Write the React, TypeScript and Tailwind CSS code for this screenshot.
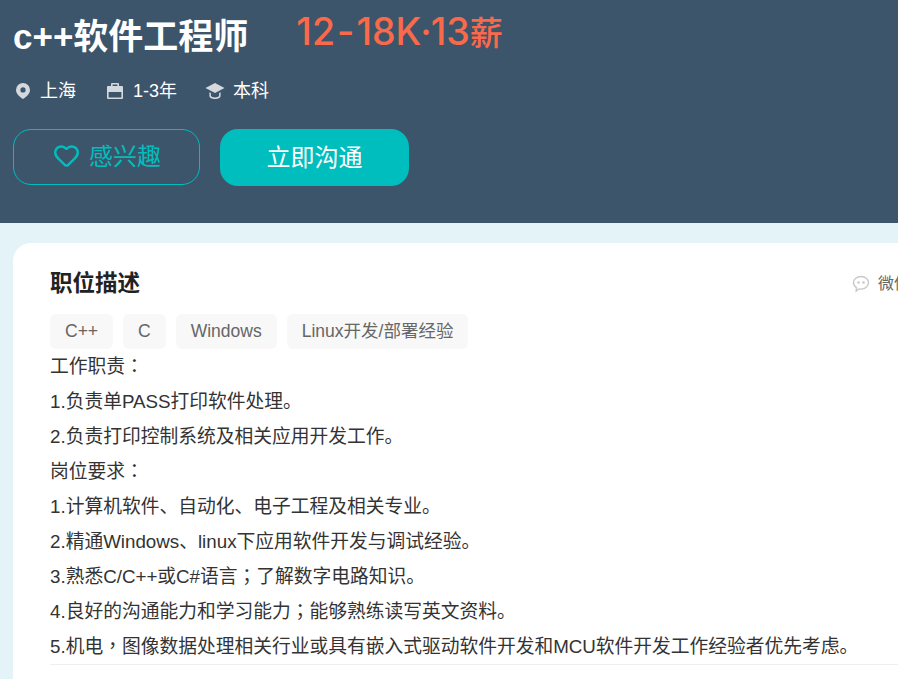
import { Heart } from "lucide-react";

const fontStack = "font-['Liberation_Sans','Noto_Sans_CJK_SC',sans-serif]";

const tags = ["C++", "C", "Windows", "Linux开发/部署经验"];

const descLines = [
  "工作职责：",
  "1.负责单PASS打印软件处理。",
  "2.负责打印控制系统及相关应用开发工作。",
  "岗位要求：",
  "1.计算机软件、自动化、电子工程及相关专业。",
  "2.精通Windows、linux下应用软件开发与调试经验。",
  "3.熟悉C/C++或C#语言；了解数字电路知识。",
  "4.良好的沟通能力和学习能力；能够熟练读写英文资料。",
  "5.机电，图像数据处理相关行业或具有嵌入式驱动软件开发和MCU软件开发工作经验者优先考虑。",
];

// the colon, comma and semicolon sit centred in their cell in the reference font
function DescLine({ text }: { text: string }) {
  return (
    <p className="h-[35px] whitespace-nowrap">
      {text.split(/([：，；])/).map((part, index) =>
        index % 2 === 1 ? (
          <span key={index} className="font-['Noto_Sans_CJK_TC',sans-serif] leading-[0]">{part}</span>
        ) : (
          part
        ),
      )}
    </p>
  );
}

function PinIcon() {
  return (
    <svg width="16" height="18" viewBox="0 0 16 18" fill="#d5d9de">
      <path fillRule="evenodd" d="M8 1a7 7 0 0 1 7 7c0 3.500-3.800 7.200-7 9-3.200-1.800-7-5.500-7-9a7 7 0 0 1 7-7Zm0 4.300a2.600 2.600 0 1 0 0 5.200 2.600 2.600 0 0 0 0-5.200Z" />
    </svg>
  );
}

function CaseIcon() {
  return (
    <svg width="18" height="18" viewBox="0 0 18 18" fill="#d5d9de">
      <path fillRule="evenodd" d="M6 1h6a1 1 0 0 1 1 1v2h3a1 1 0 0 1 1 1v11a1 1 0 0 1-1 1H2a1 1 0 0 1-1-1V5a1 1 0 0 1 1-1h3V2a1 1 0 0 1 1-1Zm.6 1.400V4h4.800V2.400H6.600ZM2.600 10v5.400h12.800V10H2.600Z" />
    </svg>
  );
}

function CapIcon() {
  return (
    <svg width="20" height="18" viewBox="0 0 20 18" fill="#d5d9de">
      <path d="M10 1 19.500 6 10 11 .5 6Z" />
      <path d="M4.400 10.200v3.800c0 1.700 2.600 3 5.600 3s5.600-1.300 5.600-3v-3.800l-1.500.8v2.800c-.4.900-2.200 1.700-4.100 1.700s-3.700-.8-4.100-1.700V11Z" />
    </svg>
  );
}

function WechatIcon() {
  return (
    <svg width="18" height="18" viewBox="0 0 18 18" fill="none" stroke="#c8c8c8" strokeWidth="1.400">
      <path d="M9 1.500c4.200 0 7.500 2.800 7.500 6.300s-3.300 6.300-7.500 6.300c-.7 0-1.400-.1-2-.2L4.200 16l.2-3.300C2.600 11.500 1.500 9.800 1.500 7.800 1.500 4.300 4.800 1.500 9 1.500Z" />
      <circle cx="6.500" cy="7.500" r=".6" fill="#c8c8c8" />
      <circle cx="11.500" cy="7.500" r=".6" fill="#c8c8c8" />
    </svg>
  );
}

export default function App() {
  return (
    <div className={`h-[679px] w-[898px] overflow-hidden bg-[#e3f3f7] ${fontStack}`}>
      <header className="h-[223px] bg-[#3c556b] pl-[13px]">
        <div className="flex h-[72px] items-start">
          <h1 className="mt-[15px] text-[35px] leading-[44px] font-bold text-white">c++软件工程师</h1>
          <span className="ml-[48px] mt-[10px] font-['Inter','Noto_Sans_CJK_SC',sans-serif] text-[37.5px] leading-[44px] font-medium text-[#fa6a4a]">
            12<span className="mx-[2px]">-</span>18K<span className="-mx-[1px]">·</span>13<span className="text-[33px]">薪</span>
          </span>
        </div>
        <div className="mt-[7px] flex h-[24px] items-center text-[18px] leading-[24px] text-white">
          <span className="ml-[2px] flex items-center gap-[9px]"><PinIcon />上海</span>
          <span className="ml-[30px] flex items-center gap-[9px]"><CaseIcon />1-3年</span>
          <span className="ml-[28px] flex items-center gap-[8px]"><CapIcon />本科</span>
        </div>
        <div className="mt-[26px] flex gap-[20px]">
          <button type="button" className="flex h-[56px] w-[187px] items-center justify-center gap-[9px] rounded-[18px] border border-[#00bebd] pl-[1px] text-[24px] text-[#00bebd]">
            <Heart size={27} strokeWidth={2.2} className="-mt-[4px]" />
            感兴趣
          </button>
          <button type="button" className="h-[57px] w-[189px] rounded-[18px] bg-[#00bebd] text-[24px] text-white">
            立即沟通
          </button>
        </div>
      </header>
      <main className="pl-[13px] pt-[20px]">
        <section className="h-[500px] w-[1100px] rounded-t-[18px] bg-white pl-[37px] pt-[25px]">
          <div className="flex w-[848px] items-center justify-between">
            <h2 className="text-[22.5px] leading-[32px] font-bold text-[#222222]">职位描述</h2>
            <span className="-mr-[100px] flex w-[146px] items-center gap-[8px] text-[16px] text-[#666666]">
              <WechatIcon />微信扫码分享
            </span>
          </div>
          <ul className="mt-[14px] flex gap-[10px]">
            {tags.map((tag) => (
              <li key={tag} className="rounded-[6px] bg-[#f8f8f8] px-[15px] text-[17.5px] leading-[35px] text-[#666666]">
                {tag}
              </li>
            ))}
          </ul>
          <div className="w-[900px] border-b border-[#efefef] text-[18.75px] leading-[35px] text-[#333333]">
            {descLines.map((line) => (
              <DescLine key={line} text={line} />
            ))}
          </div>
        </section>
      </main>
    </div>
  );
}
